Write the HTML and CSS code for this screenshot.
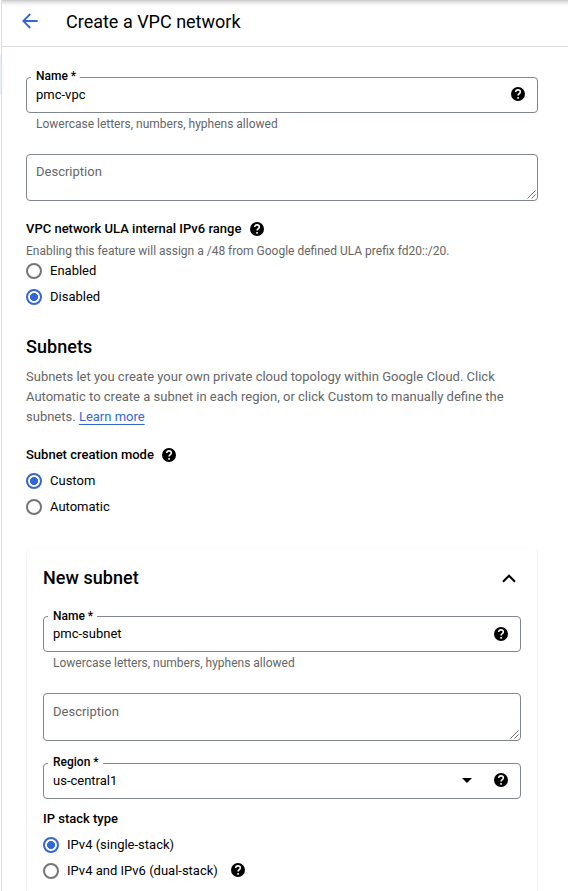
FILE: index.html
```html
<!DOCTYPE html>
<html lang="en">
<head>
<meta charset="utf-8">
<title>Create a VPC network</title>
<link rel="stylesheet" href="styles.css">
</head>
<body>
<svg width="0" height="0" class="defs">
  <symbol id="help" viewBox="2 2 20 20"><path d="M12 2a10 10 0 1 0 0 20 10 10 0 0 0 0-20z"/><path class="q" d="M8.7 9.2A3.3 3.3 0 0 1 12 6.1c1.9 0 3.3 1.2 3.3 2.9 0 2.3-3.2 2.6-3.2 5.2M12.1 16.3v2.4"/></symbol>
  <symbol id="grip" viewBox="0 0 9 9"><path d="M.5 8.5l8-8M4.5 8.5l4-4"/></symbol>
</svg>
<div class="app">
  <div class="rail"><div class="rail-item"></div></div>
  <main class="main">
    <header class="header">
      <svg class="back" viewBox="0 0 16 16"><path d="M15.7 8H1.5M8.3 1 1.3 8l7 7"/></svg>
      <h1 class="title">Create a VPC network</h1>
    </header>
    <form class="form">
      <div class="field">
        <span class="label">Name *</span>
        <span class="value">pmc-vpc</span>
        <svg class="help raised"><use href="#help"/></svg>
      </div>
      <p class="hint">Lowercase letters, numbers, hyphens allowed</p>
      <div class="area">Description<svg class="grip"><use href="#grip"/></svg></div>
      <h3 class="group first">VPC network ULA internal IPv6 range <svg class="help"><use href="#help"/></svg></h3>
      <p class="note">Enabling this feature will assign a /48 from Google defined ULA prefix fd20::/20.</p>
      <div class="radios">
        <label class="option"><i class="radio"></i>Enabled</label>
        <label class="option"><i class="radio on"></i>Disabled</label>
      </div>
      <h2 class="section">Subnets</h2>
      <p class="text">Subnets let you create your own private cloud topology within Google Cloud. Click Automatic to create a subnet in each region, or click Custom to manually define the subnets. <a class="link">Learn more</a></p>
      <h3 class="group">Subnet creation mode <svg class="help"><use href="#help"/></svg></h3>
      <div class="radios spaced">
        <label class="option"><i class="radio on"></i>Custom</label>
        <label class="option"><i class="radio"></i>Automatic</label>
      </div>
      <section class="card">
        <div class="card-head">
          <h2 class="card-title">New subnet</h2>
          <svg class="chevron" viewBox="0 0 14 9"><path d="M1 7.7 7 1.7l6 6"/></svg>
        </div>
        <div class="field lowered">
          <span class="label">Name *</span>
          <span class="value">pmc-subnet</span>
          <svg class="help"><use href="#help"/></svg>
        </div>
        <p class="hint">Lowercase letters, numbers, hyphens allowed</p>
        <div class="area tall">Description<svg class="grip"><use href="#grip"/></svg></div>
        <div class="field region">
          <span class="label">Region *</span>
          <span class="value">us-central1</span>
          <svg class="caret" viewBox="0 0 10 5"><path d="M0 0h10L5 5z"/></svg>
          <svg class="help raised"><use href="#help"/></svg>
        </div>
        <h3 class="group stack">IP stack type</h3>
        <div class="radios spaced">
          <label class="option"><i class="radio on"></i>IPv4 (single-stack)</label>
          <label class="option"><i class="radio"></i>IPv4 and IPv6 (dual-stack) <svg class="help raised"><use href="#help"/></svg></label>
        </div>
      </section>
    </form>
  </main>
</div>
</body>
</html>
```
FILE: styles.css
```css
* { box-sizing: border-box; }
body { margin: 0; height: 891px; overflow: hidden; background: #fff; color: #000; font: 13px/20px Roboto, sans-serif; }
h1, h2, h3, p { margin: 0; }
svg { display: block; flex: none; }
.defs { position: absolute; }
.app { display: flex; height: 891px; overflow: hidden; }
.rail { width: 2px; border-right: 1px solid #dadce0; padding-top: 55px; flex: none; }
.rail-item { height: 40px; background: #e8f0fe; }
.main { flex: 1; }
.header { height: 47px; display: flex; align-items: center; padding: 0 0 3px 20px; border-bottom: 1px solid #dadce0; background: linear-gradient(#c8c8c8, #e4e4e4 2px, #fafafa 5px, #fff 7px); }
.back { width: 16px; height: 16px; margin: -2px 28px 0 0; fill: none; stroke: #3367d6; stroke-width: 1.8; }
.title { font-size: 18px; line-height: 24px; font-weight: 400; }
.form { padding: 30px 30px 0 24px; }
.field { position: relative; height: 36px; border: 1px solid #80868b; border-radius: 4px; display: flex; align-items: center; padding: 0 12px 1px 9px; }
.label { position: absolute; left: 4px; top: -10px; padding: 0 4px 0 5px; background: #fff; font-size: 12px; line-height: 16px; font-weight: 500; }
.lowered .label { top: -9px; }
.value { flex: 1; }
.help { width: 14px; height: 14px; fill: #000; }
.help.raised { margin-bottom: 2px; }
.q { fill: none; stroke: #fff; stroke-width: 2.2; }
.hint { padding-left: 10px; margin-top: 3px; font-size: 12px; line-height: 16px; color: #666; }
.area { position: relative; height: 47px; margin-top: 22px; padding: 7px 9px; border: 1px solid #80868b; border-radius: 4px; color: #666; }
.area.tall { height: 48px; padding-top: 8px; }
.grip { position: absolute; right: 1px; bottom: 1px; width: 9px; height: 9px; stroke: #555; stroke-width: .8; }
.group { display: flex; align-items: center; gap: 8px; font-size: 13px; line-height: 20px; font-weight: 500; }
.group.first { margin-top: 18px; gap: 9px; }
.note { margin-top: 3px; font-size: 12px; line-height: 18px; color: #666; }
.radios { display: flex; flex-direction: column; gap: 6px; margin-top: 1px; }
.radios.spaced { margin-top: 6px; }
.option { display: flex; align-items: center; height: 20px; }
.option .help { margin-left: 13px; }
.radio { width: 16px; height: 16px; margin-right: 8px; border: 2px solid #757575; border-radius: 50%; }
.radio.on { border-color: #3367d6; background: radial-gradient(circle, #3367d6 3.7px, #fff 4.3px); }
.section { margin: 28px 0 8px; font-size: 18px; line-height: 24px; font-weight: 500; letter-spacing: .05px; }
.text { color: #666; margin-bottom: 18px; }
.link { color: #3367d6; text-decoration: underline; text-decoration-thickness: 1px; text-underline-offset: 3px; text-decoration-skip-ink: none; }
.card { height: 342px; margin: 32px 1px 0; padding: 16px 16px 0; border-radius: 4px 4px 0 0; box-shadow: 0 1px 2px rgba(60,64,67,.22); }
.card-head { display: flex; align-items: center; justify-content: space-between; height: 26px; margin-bottom: 25px; padding-right: 5px; }
.card-title { font-size: 18px; line-height: 24px; font-weight: 500; letter-spacing: .05px; }
.chevron { width: 14px; height: 9px; fill: none; stroke: #000; stroke-width: 2; }
.region { margin-top: 22px; }
.caret { width: 10px; height: 5px; margin-right: 22px; }
.stack { margin-top: 10px; }
```
